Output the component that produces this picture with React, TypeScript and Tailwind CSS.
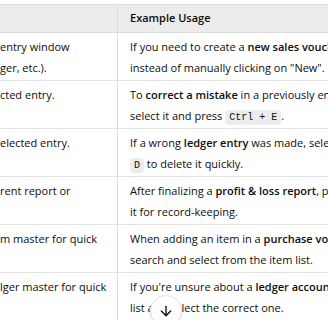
import React from 'react';
import { ArrowDown } from 'lucide-react';

type Row = {
  left: string[];
  right: React.ReactNode[];
};

const Code = ({ children }: { children: React.ReactNode }) => (
  <code className="rounded bg-[#ececec] px-1 py-[2px] font-['Liberation_Mono',monospace] text-[10px] text-[#0d0d0d]">
    {children}
  </code>
);

const rows: Row[] = [
  {
    left: ['entry window', 'ger, etc.).'],
    right: [
      <>If you need to create a <b className="font-semibold">new sales voucher</b> quickly</>,
      <>instead of manually clicking on "New".</>,
    ],
  },
  {
    left: ['cted entry.'],
    right: [
      <>To <b className="font-semibold">correct a mistake</b> in a previously entered voucher,</>,
      <>select it and press <Code>Ctrl + E</Code>.</>,
    ],
  },
  {
    left: ['elected entry.'],
    right: [
      <>If a wrong <b className="font-semibold">ledger entry</b> was made, select it and press</>,
      <><Code>D</Code> to delete it quickly.</>,
    ],
  },
  {
    left: ['rent report or'],
    right: [
      <>After finalizing a <b className="font-semibold">profit &amp; loss report</b>, print or save</>,
      <>it for record-keeping.</>,
    ],
  },
  {
    left: ['m master for quick'],
    right: [
      <>When adding an item in a <b className="font-semibold">purchase voucher</b>, quickly</>,
      <>search and select from the item list.</>,
    ],
  },
  {
    left: ['lger master for quick'],
    right: [
      <>If you're unsure about a <b className="font-semibold">ledger account</b>, open the</>,
      <>list and select the correct one.</>,
    ],
  },
];

export default function App() {
  return (
    <div className="relative h-[320px] w-[328px] overflow-hidden bg-white pt-1 font-['Open_Sans',sans-serif] text-[11px] text-[#0d0d0d]">
      <div className="w-[560px] border-t border-[#dcdcdc]">
        <div className="flex h-7 items-center bg-[#ececec] border-b border-[#dcdcdc]">
          <div className="h-full w-[118px] border-r border-[#dcdcdc]" />
          <div className="pl-3 font-semibold">Example Usage</div>
        </div>
        {rows.map((row, i) => (
          <div key={i} className="flex h-12 border-b border-[#e3e3e3]">
            <div className="w-[118px] shrink-0 overflow-hidden whitespace-nowrap border-r border-[#dcdcdc] pt-[3px] leading-[21px]">
              {row.left.map((l, j) => (
                <div key={j}>{l}</div>
              ))}
            </div>
            <div className="whitespace-nowrap pl-3 pt-[3px] leading-[21px]">
              {row.right.map((r, j) => (
                <div key={j}>{r}</div>
              ))}
            </div>
          </div>
        ))}
      </div>
      <button
        type="button"
        className="absolute left-[150px] top-[295px] flex h-8 w-8 items-center justify-center rounded-full border border-[#e3e3e3] bg-white text-[#0d0d0d] shadow-sm"
      >
        <ArrowDown className="h-4 w-4" strokeWidth={2} />
      </button>
    </div>
  );
}
